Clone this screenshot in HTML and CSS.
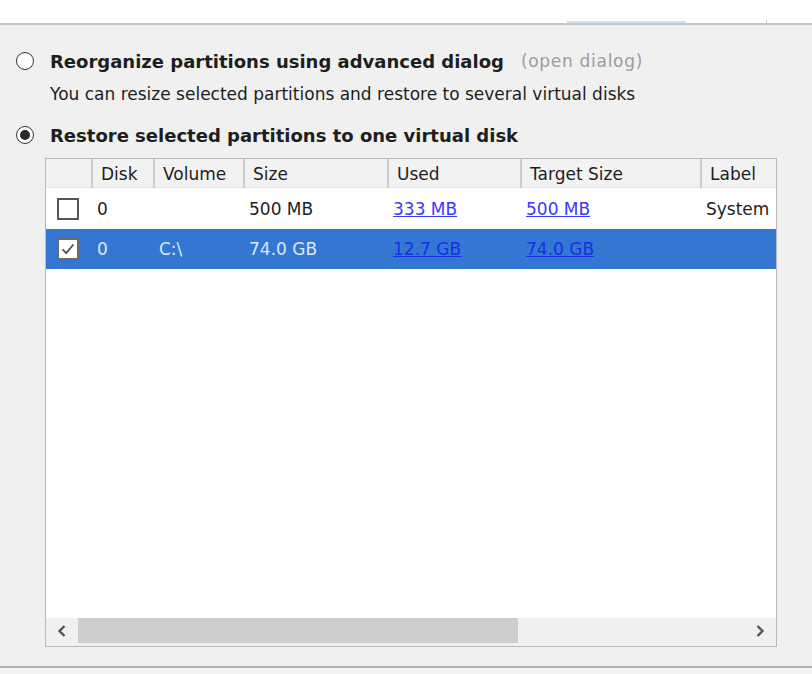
FILE: index.html
```html
<!DOCTYPE html>
<html lang="en">
<head>
<meta charset="utf-8">
<title>Restore partitions</title>
<link rel="stylesheet" href="styles.css">
</head>
<body>
<div class="top">
  <span class="focus-line"></span>
  <span class="tick"></span>
</div>
<main class="panel">
  <div class="opt opt-first">
    <span class="radio"></span>
    <span class="opt-title">Reorganize partitions using advanced dialog</span>
    <span class="open-link">(open dialog)</span>
  </div>
  <p class="desc">You can resize selected partitions and restore to several virtual disks</p>
  <div class="opt opt-second">
    <span class="radio checked"></span>
    <span class="opt-title">Restore selected partitions to one virtual disk</span>
  </div>
  <div class="grid">
    <div class="grid-body">
      <table class="parts">
        <colgroup>
          <col class="c-check"><col class="c-disk"><col class="c-vol"><col class="c-size"><col class="c-used"><col class="c-target"><col class="c-label">
        </colgroup>
        <thead>
          <tr>
            <th></th><th>Disk</th><th>Volume</th><th>Size</th><th>Used</th><th>Target Size</th><th>Label</th>
          </tr>
        </thead>
        <tbody>
          <tr class="row">
            <td><span class="cb"></span></td>
            <td>0</td>
            <td></td>
            <td>500 MB</td>
            <td><a class="lnk" href="#">333 MB</a></td>
            <td><a class="lnk" href="#">500 MB</a></td>
            <td>System Reserved</td>
          </tr>
          <tr class="row selected">
            <td><span class="cb on"><svg viewBox="0 0 20 20" width="20" height="20"><path d="M4 10.5 L8 14.5 L16 5" fill="none" stroke="#505050" stroke-width="2"/></svg></span></td>
            <td>0</td>
            <td>C:\</td>
            <td>74.0 GB</td>
            <td><a class="lnk" href="#">12.7 GB</a></td>
            <td><a class="lnk" href="#">74.0 GB</a></td>
            <td></td>
          </tr>
        </tbody>
      </table>
    </div>
    <div class="hscroll">
      <span class="arrow"><svg viewBox="0 0 12 14" width="12" height="14"><path d="M8.5 2 L3.5 7 L8.5 12" fill="none" stroke="#555" stroke-width="2.4"/></svg></span>
      <span class="track"><span class="thumb"></span></span>
      <span class="arrow"><svg viewBox="0 0 12 14" width="12" height="14"><path d="M3.5 2 L8.5 7 L3.5 12" fill="none" stroke="#555" stroke-width="2.4"/></svg></span>
    </div>
  </div>
</main>
<div class="footer"></div>
</body>
</html>
```

FILE: styles.css
```css
html, body {
  margin: 0;
  padding: 0;
}
body {
  width: 812px;
  height: 674px;
  overflow: hidden;
  background: #f0f0f0;
  font-family: "DejaVu Sans", Verdana, sans-serif;
  color: #1e1e1e;
}
.top {
  height: 23px;
  background: #ffffff;
  border-bottom: 2px solid #c6c6c6;
  display: flex;
  align-items: flex-end;
}
.focus-line {
  margin-left: 567px;
  width: 119px;
  height: 2px;
  background: #cde0f2;
}
.tick {
  margin-left: 80px;
  width: 1px;
  height: 3px;
  background: #c8c8c8;
}
.panel {
  padding: 25px 0 0 16px;
  height: 641px;
  box-sizing: border-box;
  display: flex;
  flex-direction: column;
}
.opt {
  display: flex;
  align-items: center;
  height: 22px;
}
.radio {
  width: 18px;
  height: 18px;
  border: 1px solid #333;
  border-radius: 50%;
  background: #fff;
  box-sizing: border-box;
  display: flex;
  align-items: center;
  justify-content: center;
  margin-right: 16px;
}
.radio.checked::after {
  content: "";
  width: 10px;
  height: 10px;
  border-radius: 50%;
  background: #2a2a2a;
}
.opt-title {
  font-weight: bold;
  font-size: 18px;
}
.open-link {
  margin-left: 17px;
  font-size: 17px;
  letter-spacing: 0.7px;
  color: #9c9c9c;
}
.desc {
  margin: 11px 0 0 34px;
  font-size: 17px;
  height: 22px;
  line-height: 22px;
}
.opt-second {
  margin-top: 19px;
}
.grid {
  margin: 12px 0 0 29px;
  width: 732px;
  height: 489px;
  box-sizing: border-box;
  border: 1px solid #b9b9b9;
  background: #fff;
  display: flex;
  flex-direction: column;
}
.grid-body {
  flex: 1;
  overflow: hidden;
}
.parts {
  table-layout: fixed;
  width: 777px;
  border-collapse: collapse;
  font-size: 17px;
}
.c-check { width: 46px; }
.c-disk { width: 62px; }
.c-vol { width: 90px; }
.c-size { width: 144px; }
.c-used { width: 133px; }
.c-target { width: 180px; }
.c-label { width: 122px; }
.parts th {
  height: 26px;
  padding: 2px 0 0 8px;
  text-align: left;
  font-weight: normal;
  background: #f2f2f2;
  border-right: 2px solid #cdcdcd;
  border-bottom: 1px solid #e4e4e4;
  white-space: nowrap;
  overflow: hidden;
}
.parts td {
  padding: 0 0 0 5px;
  white-space: nowrap;
  overflow: hidden;
}
.row td {
  height: 41px;
}
.row.selected td {
  height: 40px;
  background: #3377d2;
  color: #dce8f8;
}
.lnk {
  color: #3838ff;
  text-decoration: underline;
}
.selected .lnk {
  color: #1a2ee4;
}
.cb {
  display: block;
  width: 22px;
  height: 22px;
  margin-left: 6px;
  box-sizing: border-box;
  border: 2px solid #555;
  background: #fff;
}
.cb.on {
  border-color: #6a6a6a;
  display: flex;
  align-items: center;
  justify-content: center;
}
.cb svg {
  display: block;
}
.hscroll {
  height: 28px;
  background: #f0f0f0;
  display: flex;
  align-items: flex-start;
}
.arrow {
  width: 32px;
  height: 25px;
  display: flex;
  align-items: center;
  justify-content: center;
}
.track {
  flex: 1;
  height: 25px;
}
.thumb {
  display: block;
  width: 440px;
  height: 25px;
  background: #cdcdcd;
}
.footer {
  height: 6px;
  border-top: 2px solid #b0b0b0;
  background: #f3f3f3;
}
```
